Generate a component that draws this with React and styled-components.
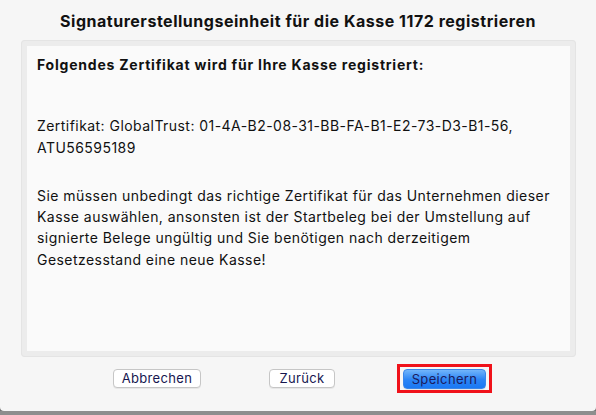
import styled, { createGlobalStyle } from 'styled-components'

const Global = createGlobalStyle`
    html, body {
        margin: 0;
        padding: 0;
        background: #8e8e8e;
    }
    body {
        font-family: Inter, "Liberation Sans", Arial, sans-serif;
        color: #111;
    }
`

const Window = styled.div`
    height: 411px;
    background: #f6f6f6;
    display: flex;
    flex-direction: column;
    box-shadow: 0 1px 3px rgba(0, 0, 0, 0.5);
    border-radius: 0 0 4px 4px;
`
const Title = styled.h1`
    margin: 0;
    height: 40px;
    display: flex;
    align-items: center;
    justify-content: center;
    font-size: 16px;
    font-weight: 700;
    letter-spacing: 0.52px;
    color: #111;
    padding-top: 1px;
    box-sizing: border-box;
`
const Frame = styled.div`
    margin: 0 20px 0 21px;
    height: 317px;
    background: #ececec;
    border-radius: 4px;
    padding: 6px;
    box-sizing: border-box;
    box-shadow: inset 0 0 0 1px #e4e4e4;
`
const Content = styled.div`
    height: 100%;
    background: #fafafa;
    padding: 8px 10px;
    box-sizing: border-box;
    font-size: 14px;
    letter-spacing: 0.45px;
    line-height: 21.3px;
`
const Heading = styled.p`
    margin: 0 0 ${p => p.$gap}px;
    font-weight: 700;
    letter-spacing: 0.78px;
`
const Para = styled.p`
    margin: 0 0 ${p => p.$gap || 0}px;
`
const Footer = styled.div`
    flex: 1;
    display: flex;
    align-items: center;
    padding-left: 113px;
    padding-bottom: 12px;
`
const Button = styled.button`
    height: 19px;
    padding: 0;
    width: ${p => p.$w}px;
    margin-right: ${p => p.$mr || 0}px;
    font-family: Inter, "Liberation Sans", Arial, sans-serif;
    font-size: 13px;
    letter-spacing: 0.35px;
    color: #16164f;
    background: #fff;
    border: 1px solid #c6c6c6;
    border-radius: 4px;
    box-shadow: 0 1px 0 rgba(0, 0, 0, 0.06);
`
const Highlight = styled.div`
    border: 3px solid #f0121a;
    padding: 2px 3px 1px;
    display: flex;
`
const PrimaryButton = styled(Button)`
    height: 20px;
    border: 1px solid #3a86ea;
    background: linear-gradient(#72b5fb, #2a84f6 55%, #1a78f3);
    color: #1b1b5e;
`

export default function App() {
    return (
        <>
            <Global />
            <Window>
                <Title>Signaturerstellungseinheit für die Kasse 1172 registrieren</Title>
                <Frame>
                    <Content>
                        <Heading $gap={40}>Folgendes Zertifikat wird für Ihre Kasse registriert:</Heading>
                        <Para $gap={27}>
                            Zertifikat: GlobalTrust: 01-4A-B2-08-31-BB-FA-B1-E2-73-D3-B1-56, ATU56595189
                        </Para>
                        <Para>
                            Sie müssen unbedingt das richtige Zertifikat für das Unternehmen dieser Kasse auswählen, ansonsten ist der Startbeleg bei der Umstellung auf signierte Belege ungültig und Sie benötigen nach derzeitigem Gesetzesstand eine neue Kasse!
                        </Para>
                    </Content>
                </Frame>
                <Footer>
                    <Button $w={88} $mr={68}>Abbrechen</Button>
                    <Button $w={66} $mr={62}>Zurück</Button>
                    <Highlight>
                        <PrimaryButton $w={83}>Speichern</PrimaryButton>
                    </Highlight>
                </Footer>
            </Window>
        </>
    )
}
